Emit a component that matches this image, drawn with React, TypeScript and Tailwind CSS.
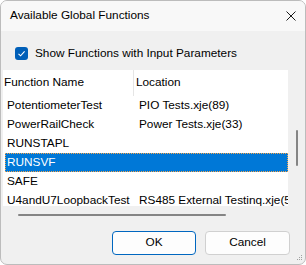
import React from "react";

const rows = [
  { name: "PotentiometerTest", loc: "PIO Tests.xje(89)" },
  { name: "PowerRailCheck", loc: "Power Tests.xje(33)" },
  { name: "RUNSTAPL", loc: "" },
  { name: "RUNSVF", loc: "", selected: true },
  { name: "SAFE", loc: "" },
  { name: "U4andU7LoopbackTest", loc: "RS485 External Testinq.xje(51)" },
];

export default function App() {
  return (
    <div
      className="w-[306px] h-[265px] bg-[#f0f0f0] border border-[#bcbcbc] rounded-[7px] overflow-hidden flex flex-col text-[11.8px] text-black"
      style={{ fontFamily: '"Liberation Sans", Arial, sans-serif' }}
    >
      {/* Title bar */}
      <div className="h-[30px] shrink-0 bg-[#f8f8f8] flex items-center justify-between pl-[9px] pr-[9px]">
        <span>Available Global Functions</span>
        <svg width="10" height="10" viewBox="0 0 10 10">
          <path d="M0.5 0.5L9.5 9.5M9.5 0.5L0.5 9.5" stroke="#1a1a1a" strokeWidth="1" />
        </svg>
      </div>

      {/* Checkbox */}
      <div className="h-[39px] shrink-0 pl-[14px] pt-[16px] flex items-start gap-[7px]">
        <div className="w-[13px] h-[13px] rounded-[3px] bg-[#005fb8] flex items-center justify-center">
          <svg width="9" height="9" viewBox="0 0 9 9">
            <path d="M1.5 4.8L3.6 6.8L7.6 2.4" stroke="white" strokeWidth="1.1" fill="none" />
          </svg>
        </div>
        <span className="leading-[13px]">Show Functions with Input Parameters</span>
      </div>

      {/* List */}
      <div className="ml-[2px] flex flex-col shrink-0">
        <div className="flex">
          <div className="w-[285px] h-[136px] bg-white overflow-hidden">
            <div className="h-[26px] flex items-center">
              <div className="w-[131px] h-full flex items-center pl-[1px] border-r border-[#e5e5e5]">
                Function Name
              </div>
              <div className="pl-[2px]">Location</div>
            </div>
            {rows.map((r) => (
              <div key={r.name} className="h-[19px] pl-[2px]">
                <div
                  className={
                    r.selected
                      ? "h-[19px] flex items-center bg-[#0078d7] text-white border border-dotted border-[#f7a54a]"
                      : "h-[19px] flex items-center border border-transparent"
                  }
                >
                  <div className="w-[133px] shrink-0 pl-[1px] whitespace-nowrap">{r.name}</div>
                  <div className="whitespace-nowrap">{r.loc}</div>
                </div>
              </div>
            ))}
          </div>
          <div className="w-[13px] h-[136px] pt-[60px] pl-[8px]">
            <div className="w-[2px] h-[36px] bg-[#858585] rounded-full" />
          </div>
        </div>
        <div className="h-[13px] pt-[8px] pl-[15px]">
          <div className="w-[208px] h-[2px] bg-[#858585] rounded-full" />
        </div>
      </div>

      {/* Buttons */}
      <div className="flex justify-end gap-[9px] pr-[15px] pt-[12px] relative flex-1">
        <button className="w-[84px] h-[24px] rounded-[4px] bg-[#fdfdfd] border border-[#0067c0]">OK</button>
        <button className="w-[85px] h-[24px] rounded-[4px] bg-[#fdfdfd] border border-[#d0d0d0]">Cancel</button>
        <svg className="absolute right-[2px] bottom-[2px]" width="7" height="7" viewBox="0 0 7 7">
          <rect x="5" y="0" width="1" height="1" fill="#a0a0a0" />
          <rect x="3" y="2" width="1" height="1" fill="#a0a0a0" />
          <rect x="5" y="2" width="1" height="1" fill="#a0a0a0" />
          <rect x="1" y="4" width="1" height="1" fill="#a0a0a0" />
          <rect x="3" y="4" width="1" height="1" fill="#a0a0a0" />
          <rect x="5" y="4" width="1" height="1" fill="#a0a0a0" />
        </svg>
      </div>
    </div>
  );
}
